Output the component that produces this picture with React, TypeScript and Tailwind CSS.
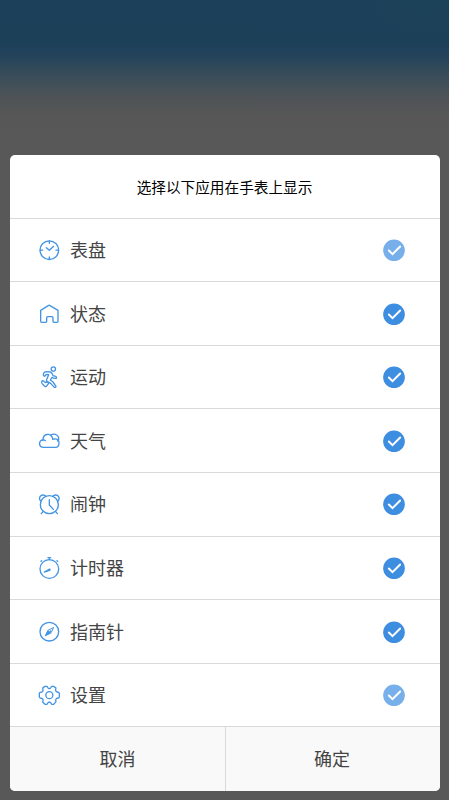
import type { ReactNode } from 'react'
import clsx from 'clsx'

interface WatchApp {
  name: string
  viewBox: string
  icon: ReactNode
  locked?: boolean
}

const apps: WatchApp[] = [
  {
    name: '表盘',
    viewBox: '24 12 66 66',
    locked: true,
    icon: (
      <>
        <circle cx="58" cy="45.5" r="28" />
        <path d="M58 18v7M58 66v7M31 45.5h7M78 45.5h7M49 38l9 8 13-12" />
      </>
    ),
  },
  {
    name: '状态',
    viewBox: '24 24 66 66',
    icon: <path d="M32 46 56 31q1.5-1 3 0l25 15v33q0 3-3 3h-9q-3 0-3-3V68q0-3-3-3H53q-3 0-3 3v11q0 3-3 3H35q-3 0-3-3Z" />,
  },
  {
    name: '运动',
    viewBox: '24 24 66 66',
    icon: (
      <>
        <circle cx="70" cy="33" r="6.5" />
        <path d="M40 51q0-9 8-10l13 1q6 2 8 11l8 2q4 2 2 6-8 1-13-3l-5 8 8 6 9 13q0 4-5 3L62 76l-11-6q-3-4 0-8l5-12-7-1-4 5q-4 1-5-3Z" />
        <path d="M37 68q3-1 9 6l5-3 5 5-7 9q-3 2-6-1l-7-8q-3-5 1-8Z" />
      </>
    ),
  },
  {
    name: '天气',
    viewBox: '24 24 66 66',
    icon: (
      <>
        <path d="M41 76C25 76 25 54 39 54C39 35 60 32 66 45C69 49 68 52 68 52C81 48 88 54 87 63C87 72 82 76 76 76Z" />
        <path d="M62 39C70 34 84 36 86 47C87 52 85 55 83 57M39 54q4-1 7 2" />
      </>
    ),
  },
  {
    name: '闹钟',
    viewBox: '24 24 66 66',
    icon: (
      <>
        <circle cx="58" cy="59" r="27" />
        <path d="M58 44v16l12 13M31 47C25 38 32 29 40 30q6 1 8 5M85 47C91 38 84 29 76 30q-6 1-8 5M39 80l-5 6M77 80l5 6" />
      </>
    ),
  },
  {
    name: '计时器',
    viewBox: '24 27 66 66',
    icon: (
      <>
        <circle cx="58" cy="63" r="28" />
        <path d="M54 29h8M58 29v6M35 38l-2 2M81 38l2 2" />
        <path d="m43 72 16-9 1 3Z" fill="currentColor" />
      </>
    ),
  },
  {
    name: '指南针',
    viewBox: '24 27 66 66',
    icon: (
      <>
        <circle cx="58" cy="59" r="28" />
        <path d="m70 47-16 8-8 16 16-8Z" strokeWidth="3" />
        <path d="m46 71 8-16 8 8Z" fill="currentColor" strokeWidth="1" />
        <path d="m62 57-3 4" strokeWidth="4" />
      </>
    ),
  },
  {
    name: '设置',
    viewBox: '24 24 66 66',
    locked: true,
    icon: (
      <>
        <path d="M45 31h6q3 7 7 7t7-7h6l7 5q-3 7 0 10t8 3l2 3v11l-2 3q-6 0-8 3t0 8l-7 8h-6q-3-7-7-7t-7 7h-6l-7-7q3-6 0-9t-8-3l-2-3V52l2-3q6 0 8-3t0-10Z" />
        <circle cx="58" cy="57.5" r="10.5" />
      </>
    ),
  },
]

function CheckMark({ locked }: { locked?: boolean }) {
  return (
    <svg viewBox="39.5 26.5 66 66" className={clsx('size-[22px]', locked ? 'text-[#76afea]' : 'text-[#3d8de0]')}>
      <circle cx="72.5" cy="60.5" r="32.5" fill="currentColor" />
      <path d="m57 61 11 11 23-23" fill="none" stroke="white" strokeWidth="6" strokeLinecap="round" />
    </svg>
  )
}

function AppRow({ app }: { app: WatchApp }) {
  return (
    <li className="flex min-h-0 flex-1 items-center border-b border-[#d9d9d9] pr-[35px] pl-7">
      <svg
        viewBox={app.viewBox}
        className="size-[22px] overflow-visible text-[#4394e3]"
        fill="none"
        stroke="currentColor"
        strokeWidth="4"
        strokeLinecap="round"
        strokeLinejoin="round"
      >
        {app.icon}
      </svg>
      <span className="ml-2.5 flex-1 pb-0.5 text-[18px] leading-none text-[#444]">{app.name}</span>
      <CheckMark locked={app.locked} />
    </li>
  )
}

export default function App() {
  return (
    <div className="h-screen overflow-hidden bg-[#585858] bg-[radial-gradient(ellipse_60px_40px_at_425px_0px,#1b455980,transparent),linear-gradient(to_bottom,#1c4059_0px,#1d4059_44px,#24445b_57px,#334a59_70px,#415059_84px,#4e5357_98px,#565756_115px,#585858_135px)] px-2.5 pt-[155px] font-['Noto_Sans_CJK_SC',sans-serif]">
      {/* Dialog */}
      <div className="flex h-[636px] w-[430px] flex-col overflow-hidden rounded-[5px] bg-white">
        <h1 className="flex h-[63.6px] shrink-0 items-center justify-center border-b border-[#d9d9d9] pt-0.5 pr-px text-[14.65px] leading-none text-black">
          选择以下应用在手表上显示
        </h1>
        <ul className="flex min-h-0 flex-1 flex-col">
          {apps.map((app) => (
            <AppRow key={app.name} app={app} />
          ))}
        </ul>
        <div className="flex h-[63.6px] shrink-0 bg-[#f9f9f9] text-[18px] leading-none text-[#444]">
          <button className="w-[216px] border-r border-[#d9d9d9] pb-0.5">取消</button>
          <button className="flex-1 pr-0.5 pb-0.5">确定</button>
        </div>
      </div>
    </div>
  )
}
